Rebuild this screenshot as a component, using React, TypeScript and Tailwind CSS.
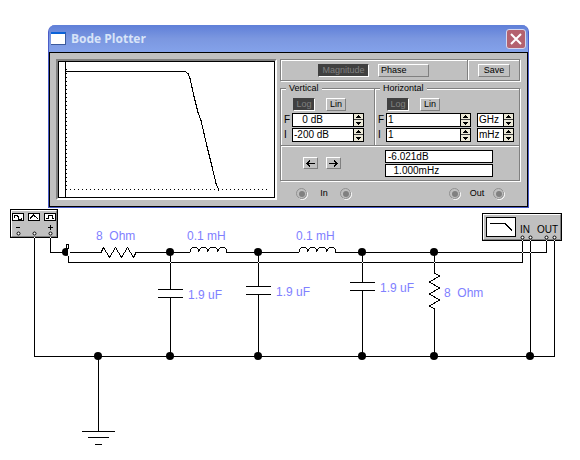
import React from 'react';

const raised = 'border border-t-white border-l-white border-r-[#808080] border-b-[#808080] bg-[#c0c0c0]';
const pressed = 'border border-[#404040] border-r-white border-b-white bg-[#404040] text-[#808080]';
const groove = 'border border-[#808080] shadow-[1px_1px_0_#fff,inset_1px_1px_0_#fff]';

interface PushButtonProps {
  active?: boolean;
  className: string;
  children: React.ReactNode;
}

const PushButton: React.FC<PushButtonProps> = ({ active, className, children }) => (
  <button
    type="button"
    aria-pressed={active}
    className={`flex h-[13px] items-center text-[9px] leading-none ${active ? pressed : raised} ${className}`}
  >
    {children}
  </button>
);

interface SpinFieldProps {
  id: string;
  name: string;
  value: string;
  className: string;
}

const SpinField: React.FC<SpinFieldProps> = ({ id, name, value, className }) => (
  <div className={`flex h-[14px] border border-black bg-white ${className}`}>
    <input
      id={id}
      aria-label={name}
      defaultValue={value}
      className="min-w-0 flex-1 px-px text-[10px] leading-3 outline-none"
    />
    <div className="flex w-[10px] flex-col border-l border-black bg-[#ece9d8]">
      <button type="button" aria-label={`${name} up`} className="flex h-[6px] items-center justify-center border-b border-[#404040]">
        <svg width="5" height="3" viewBox="0 0 5 3" shapeRendering="crispEdges">
          <path d="M2 0h1v1h1v1h1v1H0V2h1V1h1z" />
        </svg>
      </button>
      <button type="button" aria-label={`${name} down`} className="flex h-[6px] items-center justify-center">
        <svg width="5" height="3" viewBox="0 0 5 3" shapeRendering="crispEdges">
          <path d="M0 0h5v1H4v1H3v1H2V2H1V1H0z" />
        </svg>
      </button>
    </div>
  </div>
);

interface AxisGroupProps {
  title: string;
  final: string;
  initial: string;
  units?: [string, string];
  className: string;
}

const AxisGroup: React.FC<AxisGroupProps> = ({ title, final, initial, units, className }) => {
  const rows = [
    { label: 'F', value: final, unit: units?.[0] },
    { label: 'I', value: initial, unit: units?.[1] },
  ];

  return (
    <fieldset className={`min-w-0 ${groove} ${className}`}>
      <legend className="ml-[5px] bg-[#c0c0c0] px-[3px] text-[9px] leading-[11px]">{title}</legend>
      <div className="flex flex-col gap-[2px] pt-1 pb-[3px] pl-[3px]">
        <div className="flex gap-[11px] pl-[9px]">
          <PushButton active className="w-[22px] justify-center">Log</PushButton>
          <PushButton className="w-5 justify-center">Lin</PushButton>
        </div>
        <div className="flex flex-col gap-px">
          {rows.map(({ label, value, unit }) => (
            <div key={label} className="flex items-center">
              <label htmlFor={`${title}-${label}`} className="w-2 text-[10px] leading-none">
                {label}
              </label>
              <SpinField
                id={`${title}-${label}`}
                name={`${title} ${label}`}
                value={value}
                className={unit ? 'w-[85px]' : 'w-[72px]'}
              />
              {unit && (
                <SpinField id={`${title}-${label}-unit`} name={`${title} ${label} unit`} value={unit} className="ml-[6px] w-[37px]" />
              )}
            </div>
          ))}
        </div>
      </div>
    </fieldset>
  );
};

const Jack: React.FC = () => (
  <svg width="12" height="12" viewBox="0 0 12 12" fill="none">
    <circle cx="6.5" cy="6.5" r="5" stroke="#fff" />
    <circle cx="5.5" cy="5.5" r="5" fill="#c0c0c0" stroke="#909090" />
    <circle cx="6" cy="6" r="3" fill="#808080" />
  </svg>
);

const ResponsePlot: React.FC = () => (
  <div className="min-w-0 flex-1 border-2 border-t-[#808080] border-l-[#808080] border-r-white border-b-white">
    <div className="h-[137px] border border-black bg-white">
      <svg
        className="block h-full w-full"
        viewBox="0 0 215 135"
        preserveAspectRatio="none"
        fill="none"
        stroke="#000"
        shapeRendering="crispEdges"
        role="img"
        aria-label="Magnitude response"
      >
        <path d="M6.5 0v135" />
        <path d="M7.5 7v120" strokeDasharray="1 3" />
        <path d="M7 127.5h202" strokeDasharray="1 3" />
        <path d="M7 9.5h119l3 2 2 5 4 18 4 16 3 8 6 26 5 20 4 17 3 7" />
      </svg>
    </div>
  </div>
);

const BodeWindow: React.FC = () => (
  <section className="mt-[25px] mr-[51px] ml-12 overflow-hidden rounded-t-[7px] border-x border-b border-[#4a5cc8] bg-[#7b96df]">
    <header className="flex h-[27px] items-center gap-[5px] bg-linear-to-b from-[#5f7fd8] via-[#7b97e0] to-[#84a2ea] pr-[2px] pl-[2px]">
      <span className="h-[13px] w-[15px] border-t-2 border-r border-b border-t-[#0a62d8] border-r-[#3c5a9c] border-b-[#3c5a9c] bg-white" />
      <h1 className="flex-1 font-['Open_Sans'] text-[12px] leading-4 font-bold text-[#d8e4f8]">Bode Plotter</h1>
      <button
        type="button"
        aria-label="Close"
        className="flex h-5 w-5 items-center justify-center rounded-[3px] border border-[#d4d8f0] bg-[#b4626f]"
      >
        <svg width="12" height="12" viewBox="0 0 12 12" stroke="#fff" strokeWidth="2">
          <path d="M1 1l10 10M11 1L1 11" />
        </svg>
      </button>
    </header>

    <div className="flex gap-[3px] border border-black bg-[#c0c0c0] pt-[6px] pr-[7px] pl-[6px]">
      <div className="flex min-w-0 flex-1 pb-[6px]">
        <ResponsePlot />
      </div>

      <div className="flex w-60 flex-col">
        <div className={`flex h-[22px] ${groove}`}>
          <div className="flex flex-1 items-center justify-end gap-[9px] border-r border-[#808080] pr-[38px]">
            <PushButton active className="w-[51px] justify-center">Magnitude</PushButton>
            <PushButton className="w-[51px] pl-[2px]">Phase</PushButton>
          </div>
          <div className="flex w-[51px] items-center justify-center border-l border-white">
            <PushButton className="w-8 justify-center">Save</PushButton>
          </div>
        </div>

        <div className="mt-[2px] flex">
          <AxisGroup title="Vertical" final="   0 dB" initial="-200 dB" className="w-[95px]" />
          <AxisGroup title="Horizontal" final="1" initial="1" units={['GHz', 'mHz']} className="-ml-px flex-1" />
        </div>

        <div className={`-mt-px flex h-9 items-center justify-between pr-[26px] pl-[22px] ${groove}`}>
          <div className="flex gap-2">
            <button type="button" aria-label="Cursor left" className={`flex h-3 w-[15px] items-center justify-center ${raised}`}>
              <svg width="9" height="7" viewBox="0 0 9 7" shapeRendering="crispEdges">
                <path d="M0 3h9v1H0zM1 2h2v3H1zM2 1h2v1H2zM2 5h2v1H2zM3 0h1v1H3zM3 6h1v1H3z" />
              </svg>
            </button>
            <button type="button" aria-label="Cursor right" className={`flex h-3 w-[15px] items-center justify-center ${raised}`}>
              <svg width="9" height="7" viewBox="0 0 9 7" shapeRendering="crispEdges">
                <path d="M0 3h9v1H0zM6 2h2v3H6zM5 1h2v1H5zM5 5h2v1H5zM5 0h1v1H5zM5 6h1v1H5z" />
              </svg>
            </button>
          </div>
          <div className="flex w-[108px] flex-col gap-px text-[10px] leading-[11px] whitespace-pre">
            <output className="border border-black bg-white px-[2px]">-6.021dB</output>
            <output className="border border-black bg-white px-[2px]">{'  1.000mHz'}</output>
          </div>
        </div>

        <div className="flex flex-1 items-center justify-between pt-px pr-[15px] pl-4 text-[9px]">
          <div className="flex w-14 items-center justify-between">
            <Jack />
            <span>In</span>
            <Jack />
          </div>
          <div className="flex w-14 items-center justify-between">
            <Jack />
            <span>Out</span>
            <Jack />
          </div>
        </div>
      </div>
    </div>
  </section>
);

const junctions = [
  [66, 252], [170, 252], [258, 252], [362, 252], [434, 252],
  [98, 356], [170, 356], [258, 356], [362, 356], [434, 356], [530, 356],
];

const capacitors = [
  { x: 170, y: 289 },
  { x: 258, y: 286 },
  { x: 362, y: 282 },
];

const labels = [
  { x: 96, y: 240, text: '8  Ohm' },
  { x: 187, y: 240, text: '0.1 mH' },
  { x: 296, y: 240, text: '0.1 mH' },
  { x: 188, y: 299, text: '1.9 uF' },
  { x: 276, y: 296, text: '1.9 uF' },
  { x: 380, y: 292, text: '1.9 uF' },
  { x: 444, y: 297, text: '8  Ohm' },
];

const terminals = [
  [18, 233], [34, 233], [50, 233],
  [522, 237], [530, 237], [546, 237], [554, 237],
];

// places where two wires cross without touching
const crossings = [
  [170, 262], [258, 262], [362, 262], [434, 262],
  [522, 252], [530, 252], [34, 237], [50, 237], [522, 240], [530, 240], [546, 240], [554, 240],
];

const Schematic: React.FC = () => (
  <svg className="block h-auto w-full" viewBox="0 208 580 252" role="img" aria-label="Low pass filter circuit">
    <g fill="none" stroke="#000" shapeRendering="crispEdges">
      {/* wires */}
      <path d="M34.5 237V356.5H554.5V240" />
      <path d="M50.5 237V252.5H101" />
      <path d="M68.5 256V262.5H522.5V240" />
      <path d="M136 252.5H190M227 252.5H299M336 252.5H546.5V240" />
      <path d="M530.5 240V356" />

      {/* source and load resistors */}
      <path d="M101 252.5l2.5-5 6 10 6-10 6 10 6-10 6 10 2.5-5" />
      <path d="M434.5 252V273l5 3-10 6 10 6-10 6 10 6-10 6 5 3V356" />

      {/* inductors */}
      <path d="M190 252.5q0-5 4.5-5t4.5 4q0-4 4.5-4t4.5 4q0-4 5-4t5 4q0-4 4.5-4t4.5 5" />
      <path d="M299 252.5q0-5 4.5-5t4.5 4q0-4 4.5-4t4.5 4q0-4 5-4t5 4q0-4 4.5-4t4.5 5" />

      {capacitors.map(({ x, y }) => (
        <path key={x} d={`M${x + 0.5} 252V${y}M${x - 12} ${y + 0.5}h25M${x - 12} ${y + 8.5}h25M${x + 0.5} ${y + 8}V356`} />
      ))}

      {/* ground */}
      <path d="M98.5 356V431M82 431.5h33M88 437.5h21M95 444.5h7" />
    </g>

    {junctions.map(([x, y]) => (
      <circle key={`${x}-${y}`} cx={x} cy={y} r="4" />
    ))}

    {/* open wire end at the source */}
    <path d="M68 249h2v7h-2z" fill="#fff" />
    <path d="M66.5 244.5h2v4h-2z" fill="#fff" stroke="#000" shapeRendering="crispEdges" />

    {/* function generator */}
    <g shapeRendering="crispEdges" fill="none" stroke="#000">
      <rect x="10.5" y="209.5" width="47" height="28" fill="#c0c0c0" />
      <path d="M11.5 236V210.5H56" stroke="#fff" />
      <path d="M12 236.5H56.5V211" stroke="#808080" />
      <path d="M12.5 213.5h11v7h-11zM28.5 213.5h11v7h-11zM44.5 213.5h11v7h-11z" fill="#fff" />
      <path d="M14 217.5v-1l1-1h2l1 1v2l1 1h2l1-1" />
      <path d="M30 218.5l3.5-3.5 4.5 4" />
      <path d="M46 218.5h2v-3h4v3h2" />
      <path d="M16 227.5h4M48 227.5h5M50.5 225v5" />
    </g>

    {/* plotter icon */}
    <g shapeRendering="crispEdges" fill="none" stroke="#000">
      <rect x="482.5" y="213.5" width="79" height="27" fill="#c0c0c0" />
      <path d="M483.5 239V214.5H560" stroke="#fff" />
      <path d="M484 239.5H560.5V215" stroke="#808080" />
      <rect x="486.5" y="217.5" width="29" height="19" fill="#fff" />
      <path d="M490 223.5h15l7 7" />
    </g>
    <g className="font-['Liberation_Sans'] text-[10px]">
      <text x="520" y="233">IN</text>
      <text x="537" y="233">OUT</text>
    </g>

    {crossings.map(([x, y]) => (
      <rect key={`${x}-${y}`} x={x} y={y} width="1" height="1" fill="#fff" />
    ))}
    {terminals.map(([x, y]) => (
      <circle key={`${x}-${y}`} cx={x + 0.5} cy={y + 0.5} r="1.5" fill="#fff" stroke="#000" />
    ))}

    {labels.map(({ x, y, text }) => (
      <text key={`${x}-${y}`} x={x} y={y} fill="#8080ff" className="font-['Liberation_Sans'] text-[12px] whitespace-pre">
        {text}
      </text>
    ))}
  </svg>
);

export default function App() {
  return (
    <main className="flow-root min-h-screen bg-white font-['Liberation_Sans',sans-serif] text-black">
      <BodeWindow />
      <Schematic />
    </main>
  );
}
